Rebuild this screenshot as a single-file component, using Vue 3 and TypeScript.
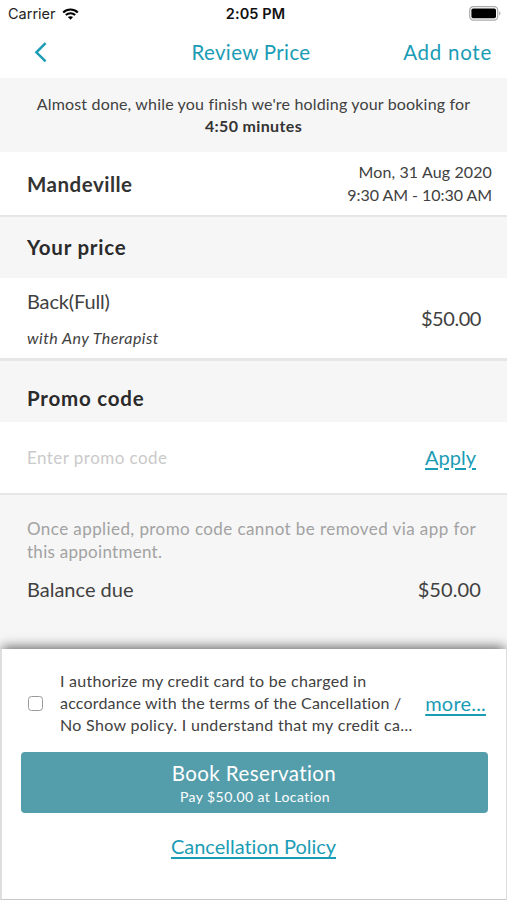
<script setup lang="ts">
import { ref } from 'vue'

const authorized = ref<boolean>(false)
const promoCode = ref<string>('')
const price: string = '$50.00'
</script>

<template>
  <div class="screen">
    <header class="status">
      <div class="carrier">
        <span>Carrier</span>
        <svg class="wifi" viewBox="0 0 17 12" width="17" height="12">
          <path d="M1.2 4.4C5.3.5 11.7.5 15.8 4.4M3.8 7.1c2.7-2.5 6.7-2.5 9.4 0" fill="none" stroke="#000" stroke-width="2.1" />
          <path d="M8.5 11.7 5.9 9.1c1.5-1.3 3.7-1.3 5.2 0z" fill="#000" />
        </svg>
      </div>
      <span class="time">2:05 PM</span>
      <svg class="battery" viewBox="0 0 32 15" width="32" height="15">
        <rect x=".7" y=".7" width="28" height="13.4" rx="3.6" fill="#fff" stroke="#aaa" stroke-width="1.2" />
        <rect x="2.4" y="2.5" width="24.6" height="9.8" rx="1.7" fill="#000" />
        <path d="M30.2 5.3c1.7.6 1.7 3.6 0 4.2z" fill="#aaa" />
      </svg>
    </header>

    <nav class="nav">
      <svg class="back" viewBox="0 0 14 22" width="14" height="22">
        <path d="M12.6 2.2 3.4 11.3l9.2 9.1" fill="none" stroke="#1b9cb5" stroke-width="2.5" />
      </svg>
      <span class="title">Review Price</span>
      <span class="add">Add note</span>
    </nav>

    <div class="notice">
      <div class="hold">Almost done, while you finish we're holding your booking for</div>
      <div class="timer">4:50 minutes</div>
    </div>

    <div class="row location">
      <span class="place">Mandeville</span>
      <div class="when">
        <div class="date">Mon, 31 Aug 2020</div>
        <div class="hours">9:30 AM - 10:30 AM</div>
      </div>
    </div>

    <h2 class="heading price-heading"><span>Your price</span></h2>

    <div class="row service">
      <div>
        <div class="name">Back(Full)</div>
        <div class="therapist">with Any Therapist</div>
      </div>
      <span class="amount">{{ price }}</span>
    </div>

    <h2 class="heading promo-heading"><span>Promo code</span></h2>

    <div class="row promo">
      <input v-model="promoCode" class="code" type="text" placeholder="Enter promo code" />
      <a class="link apply">Apply</a>
    </div>

    <div class="summary">
      <div class="hint">
        <div class="hint-a">Once applied, promo code cannot be removed via app for</div>
        <div class="hint-b">this appointment.</div>
      </div>
      <div class="balance">
        <span class="due">Balance due</span>
        <span class="total">{{ price }}</span>
      </div>
    </div>

    <footer class="sheet">
      <div class="consent">
        <input v-model="authorized" class="check" type="checkbox" />
        <div class="terms">
          <div class="t1">I authorize my credit card to be charged in</div>
          <div class="t2">accordance with the terms of the Cancellation /</div>
          <div class="t3">No Show policy. I understand that my credit ca…</div>
        </div>
        <a class="link more">more...</a>
      </div>
      <button class="book" type="button">
        <span class="book-title">Book Reservation</span>
        <span class="book-sub">Pay {{ price }} at Location</span>
      </button>
      <a class="link policy">Cancellation Policy</a>
    </footer>
  </div>
</template>

<style>
body {
  margin: 0;
  background: #f6f6f6;
}
</style>

<style scoped>
.screen {
  width: 507px;
  height: 900px;
  overflow: hidden;
  display: flex;
  flex-direction: column;
  background: #f6f6f6;
  color: #414141;
  font-family: Lato, sans-serif;
  font-variant-ligatures: none;
  white-space: nowrap;
}
.screen * {
  box-sizing: border-box;
}
.status {
  flex: none;
  height: 28px;
  display: grid;
  grid-template-columns: 1fr auto 1fr;
  align-items: center;
  padding: 0 6px 1px 8px;
  background: #fff;
  color: #222;
  font-family: Inter, sans-serif;
  font-size: 14.5px;
}
.carrier {
  display: flex;
  align-items: center;
  gap: 6px;
}
.time {
  font-weight: 600;
  letter-spacing: 0.1px;
  margin-left: 2px;
  color: #111;
}
.battery {
  justify-self: end;
}
.nav {
  flex: none;
  height: 50px;
  display: grid;
  grid-template-columns: 1fr auto 1fr;
  align-items: center;
  padding: 0 15px 3px 33px;
  background: #fff;
  color: #1b9cb5;
  font-size: 20.5px;
}
.title {
  letter-spacing: 0.35px;
  margin-right: 23px;
}
.add {
  justify-self: end;
  letter-spacing: 0.75px;
}
.notice {
  flex: none;
  height: 74px;
  padding-top: 15px;
  text-align: center;
  font-size: 16px;
  line-height: 22px;
}
.hold {
  letter-spacing: 0.17px;
}
.timer {
  font-weight: 700;
  letter-spacing: 0.35px;
  color: #333;
}
.row {
  flex: none;
  display: flex;
  align-items: center;
  justify-content: space-between;
  background: #fff;
  border-bottom: 2px solid #e6e6e6;
}
.location {
  height: 65px;
  padding: 0 15px 1px 27px;
}
.place {
  padding-top: 1px;
  font-size: 20.5px;
  font-weight: 700;
  letter-spacing: 0.5px;
  color: #333;
}
.when {
  text-align: right;
  font-size: 16px;
  line-height: 23px;
}
.date {
  letter-spacing: 0.12px;
}
.hours {
  letter-spacing: -0.05px;
}
.heading {
  flex: none;
  margin: 0;
  height: 61px;
  padding: 0 0 2px 27px;
  display: flex;
  align-items: center;
  font-size: 20.5px;
  font-weight: 700;
  letter-spacing: 0.78px;
  color: #2b2b2b;
}
.promo-heading {
  padding-top: 14px;
}
.service {
  height: 83px;
  padding: 0 26px 0 27px;
  border-bottom-width: 3px;
}
.name {
  font-size: 20px;
  line-height: 26px;
  letter-spacing: -0.15px;
}
.therapist {
  margin-top: 13px;
  margin-bottom: -1px;
  font-size: 16px;
  line-height: 22px;
  font-style: italic;
  letter-spacing: 0.45px;
}
.amount {
  font-size: 20px;
  letter-spacing: -0.45px;
}
.promo {
  height: 73px;
  padding: 0 31px 0 27px;
}
.code {
  width: 240px;
  padding: 0;
  border: 0;
  outline: 0;
  background: transparent;
  font: 17px Lato, sans-serif;
  letter-spacing: 0.45px;
}
.code::placeholder {
  color: #cacaca;
  opacity: 1;
}
.link {
  color: #1b9cb5;
  font-size: 20px;
  text-decoration: underline;
  text-decoration-thickness: 1.5px;
  text-underline-offset: 3px;
}
.apply {
  padding-bottom: 2px;
}
.summary {
  flex: 1;
  padding: 22px 26px 0 27px;
}
.hint {
  color: #a2a2a2;
  font-size: 17px;
  line-height: 23px;
}
.hint-a {
  letter-spacing: 0.42px;
}
.hint-b {
  letter-spacing: 0.28px;
}
.balance {
  display: flex;
  justify-content: space-between;
  align-items: center;
  margin-top: 13px;
  font-size: 20px;
  line-height: 26px;
}
.total {
  letter-spacing: 0.1px;
}
.sheet {
  flex: none;
  height: 251px;
  display: flex;
  flex-direction: column;
  align-items: center;
  border: 1px solid #dedede;
  border-width: 0 1px 1px 2px;
  border-bottom-color: #c8c8c8;
  background: #fff;
  box-shadow: 0 -4px 11px -2px #666;
  padding: 21px 19px 0 19px;
}
.consent {
  width: 100%;
  display: flex;
  align-items: center;
  padding-left: 7px;
}
.check {
  appearance: none;
  flex: none;
  width: 15px;
  height: 15px;
  margin: 0 17px 0 0;
  border: 1.5px solid #999;
  border-radius: 3.5px;
  background: #fff;
}
.terms {
  flex: 1;
  font-size: 16px;
  line-height: 22px;
}
.t1 {
  letter-spacing: 0.27px;
}
.t2 {
  letter-spacing: 0.18px;
}
.t3 {
  letter-spacing: 0.31px;
}
.more {
  margin-right: 1px;
  letter-spacing: 0.2px;
}
.book {
  flex: none;
  width: 467px;
  height: 61px;
  margin-top: 16px;
  padding: 2px 0 0;
  display: flex;
  flex-direction: column;
  align-items: center;
  justify-content: center;
  border: 0;
  border-radius: 4px;
  background: #549eac;
  color: #fff;
  font-family: Lato, sans-serif;
}
.book-title {
  margin-top: 1px;
  font-size: 20.5px;
  line-height: 26px;
  letter-spacing: 0.4px;
}
.book-sub {
  margin-left: 2px;
  font-size: 14px;
  line-height: 22px;
  letter-spacing: 0.43px;
}
.policy {
  margin-top: 21px;
  margin-right: 1px;
  letter-spacing: -0.02px;
}
</style>
